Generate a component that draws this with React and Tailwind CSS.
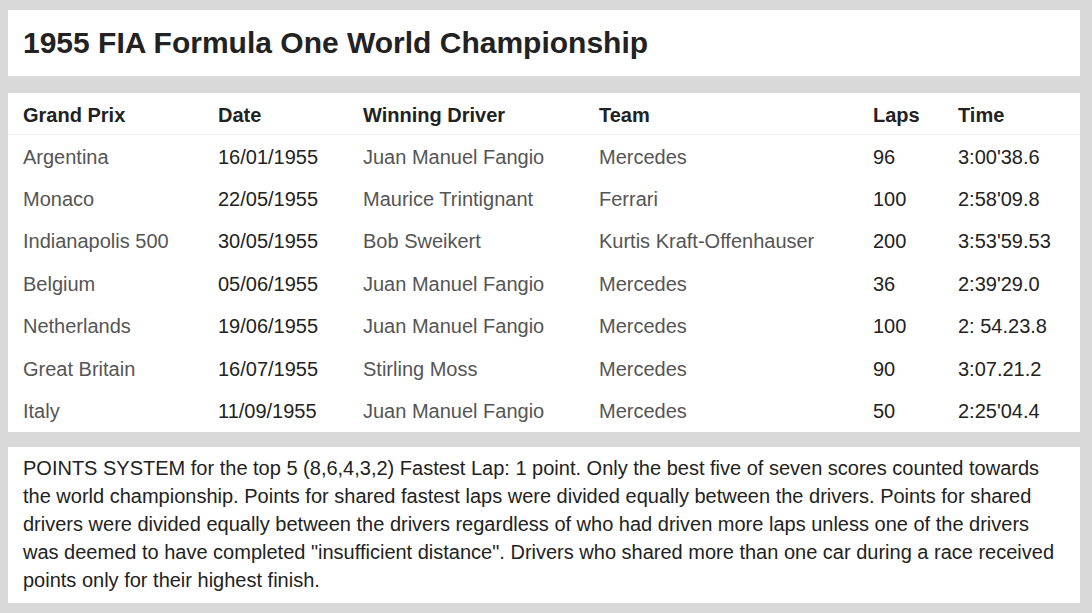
const RACES = [
  { gp: 'Argentina', date: '16/01/1955', driver: 'Juan Manuel Fangio', team: 'Mercedes', laps: '96', time: "3:00'38.6" },
  { gp: 'Monaco', date: '22/05/1955', driver: 'Maurice Trintignant', team: 'Ferrari', laps: '100', time: "2:58'09.8" },
  { gp: 'Indianapolis 500', date: '30/05/1955', driver: 'Bob Sweikert', team: 'Kurtis Kraft-Offenhauser', laps: '200', time: "3:53'59.53" },
  { gp: 'Belgium', date: '05/06/1955', driver: 'Juan Manuel Fangio', team: 'Mercedes', laps: '36', time: "2:39'29.0" },
  { gp: 'Netherlands', date: '19/06/1955', driver: 'Juan Manuel Fangio', team: 'Mercedes', laps: '100', time: '2: 54.23.8' },
  { gp: 'Great Britain', date: '16/07/1955', driver: 'Stirling Moss', team: 'Mercedes', laps: '90', time: '3:07.21.2' },
  { gp: 'Italy', date: '11/09/1955', driver: 'Juan Manuel Fangio', team: 'Mercedes', laps: '50', time: "2:25'04.4" },
]

const COLS = 'grid grid-cols-[195px_145px_236px_274px_85px_1fr]'

export default function App() {
  return (
    <div className="min-h-[613px] bg-[#d9d9d9] pl-2 pr-3 pt-[10px] pb-[10px] text-[#222] font-['Liberation_Sans',Arial,sans-serif]">
      {/* Title */}
      <div className="bg-white h-[66px] px-[15px] flex items-center">
        <h1 className="text-[30px] font-bold leading-none">1955 FIA Formula One World Championship</h1>
      </div>

      {/* Results table */}
      <div className="bg-white mt-[17px] text-[20px]">
        <div className={`${COLS} h-[42px] items-center border-b border-[#eeeeee] font-bold pt-[2px]`}>
          <div className="pl-[15px]">Grand Prix</div>
          <div className="pl-[15px]">Date</div>
          <div className="pl-[15px]">Winning Driver</div>
          <div className="pl-[15px]">Team</div>
          <div className="pl-[15px]">Laps</div>
          <div className="pl-[15px]">Time</div>
        </div>
        {RACES.map(r => (
          <div key={r.gp} className={`${COLS} h-[42.4px] items-center pt-[1px]`}>
            <div className="pl-[15px] text-[#555]">{r.gp}</div>
            <div className="pl-[15px]">{r.date}</div>
            <div className="pl-[15px] text-[#555]">{r.driver}</div>
            <div className="pl-[15px] text-[#555]">{r.team}</div>
            <div className="pl-[15px]">{r.laps}</div>
            <div className="pl-[15px]">{r.time}</div>
          </div>
        ))}
      </div>

      {/* Notes */}
      <div className="bg-white mt-[15px] px-[15px] pt-[7px] pb-[9px] text-[20px] leading-[28px]">
        POINTS SYSTEM for the top 5 (8,6,4,3,2) Fastest Lap: 1 point. Only the best five of seven scores counted towards
        the world championship. Points for shared fastest laps were divided equally between the drivers. Points for shared
        drivers were divided equally between the drivers regardless of who had driven more laps unless one of the drivers
        was deemed to have completed "insufficient distance". Drivers who shared more than one car during a race received
        points only for their highest finish.
      </div>
    </div>
  )
}
